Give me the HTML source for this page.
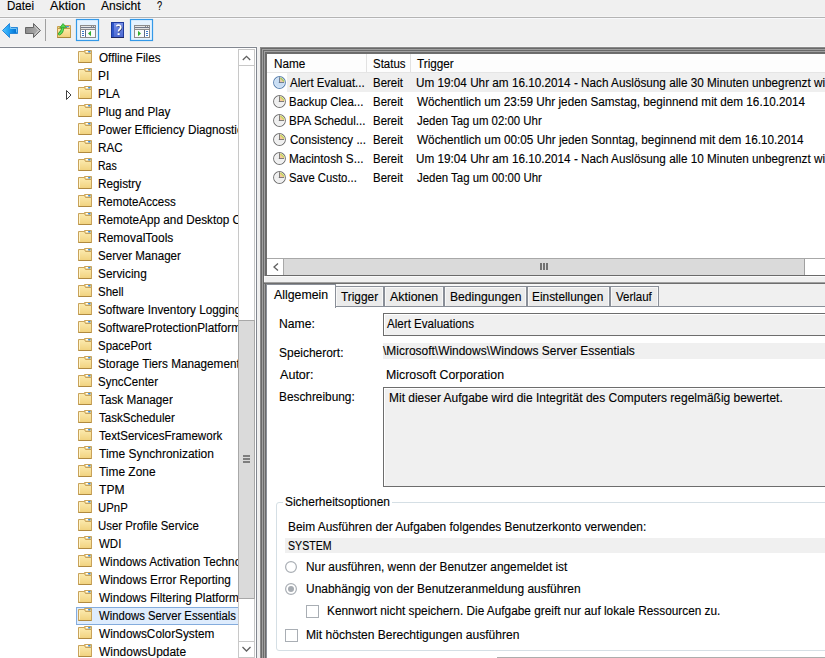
<!DOCTYPE html>
<html><head><meta charset="utf-8"><style>
html,body{margin:0;padding:0;}
body{width:825px;height:658px;overflow:hidden;position:relative;background:#f0f0f0;font-family:"Liberation Sans",sans-serif;font-size:11.75px;color:#000;}
.t{position:absolute;white-space:pre;line-height:14px;transform:scale(1,1.1);transform-origin:0 11px;-webkit-text-stroke:0.12px #000;}
</style></head><body>
<svg width="0" height="0" style="position:absolute"><defs><linearGradient id="fg" x1="0" y1="0" x2="0" y2="1"><stop offset="0" stop-color="#fcebb0"/><stop offset="1" stop-color="#f1d27e"/></linearGradient><linearGradient id="bl" x1="0" y1="0" x2="1" y2="0"><stop offset="0" stop-color="#52c4ff"/><stop offset="0.5" stop-color="#1a9af0"/><stop offset="1" stop-color="#0068c8"/></linearGradient><linearGradient id="gr" x1="0" y1="0" x2="1" y2="0"><stop offset="0" stop-color="#8a8a8a"/><stop offset="1" stop-color="#b4b4b4"/></linearGradient><linearGradient id="hb" x1="0" y1="0" x2="0" y2="1"><stop offset="0" stop-color="#7890e8"/><stop offset="1" stop-color="#4a68d0"/></linearGradient><linearGradient id="ff" x1="0" y1="0" x2="0" y2="1"><stop offset="0" stop-color="#fdeaa8"/><stop offset="1" stop-color="#f0cf78"/></linearGradient></defs></svg>
<div style="position:absolute;left:0px;top:16px;width:825px;height:1px;background:#f5f5f5"></div>
<div style="position:absolute;left:0px;top:17px;width:825px;height:1px;background:#b4b4b4"></div>
<div style="position:absolute;left:0px;top:18px;width:825px;height:1px;background:#f8f9fc"></div>
<div class="t" id="t0" style="left:7.20px;top:-1px;transform:scale(0.9846,1.1);">Datei</div>
<div class="t" id="t1" style="left:50.00px;top:-1px;transform:scale(1.0781,1.1);">Aktion</div>
<div class="t" id="t2" style="left:101.00px;top:-1px;transform:scale(1.0256,1.1);">Ansicht</div>
<div class="t" id="t3" style="left:157.00px;top:-1px;transform:scale(0.7833,1.1);">?</div>
<div style="position:absolute;left:0px;top:46px;width:825px;height:1px;background:#f5f5f5"></div>
<div style="position:absolute;left:0px;top:47px;width:257px;height:1px;background:#828790"></div>
<div style="position:absolute;left:0px;top:48px;width:256px;height:610px;background:#fff"></div>
<div style="position:absolute;left:256px;top:47px;width:1px;height:611px;background:#828790"></div>
<div style="position:absolute;left:0;top:48px;width:238px;height:610px;overflow:hidden">
<svg style="position:absolute;left:78px;top:2px" width="14" height="13" viewBox="0 0 14 13"><path d="M6.5 0.5h7v4h-7z" fill="#f0d690" stroke="#c9a45c"/>
<rect x="8" y="1" width="3" height="1.2" fill="#fff"/><rect x="10" y="0.9" width="2.6" height="1.5" rx="0.7" fill="#3d8ee0"/>
<path d="M0.5 1.5H6.5L7.5 3.5H13.5V12.5H0.5Z" fill="url(#fg)" stroke="#c9a35a"/>
<path d="M1.5 2.5V11.5" stroke="#fff4c8" stroke-width="1"/>
<path d="M0.5 12.5H13.5" stroke="#b08a40" stroke-width="1"/></svg>
<div class="t" id="t4" style="left:99.00px;top:3px;transform:scale(0.9952,1.1);">Offline Files</div>
<svg style="position:absolute;left:78px;top:20px" width="14" height="13" viewBox="0 0 14 13"><path d="M6.5 0.5h7v4h-7z" fill="#f0d690" stroke="#c9a45c"/>
<rect x="8" y="1" width="3" height="1.2" fill="#fff"/><rect x="10" y="0.9" width="2.6" height="1.5" rx="0.7" fill="#3d8ee0"/>
<path d="M0.5 1.5H6.5L7.5 3.5H13.5V12.5H0.5Z" fill="url(#fg)" stroke="#c9a35a"/>
<path d="M1.5 2.5V11.5" stroke="#fff4c8" stroke-width="1"/>
<path d="M0.5 12.5H13.5" stroke="#b08a40" stroke-width="1"/></svg>
<div class="t" id="t5" style="left:98.00px;top:21px;transform:scale(1.0111,1.1);">PI</div>
<svg style="position:absolute;left:78px;top:38px" width="14" height="13" viewBox="0 0 14 13"><path d="M6.5 0.5h7v4h-7z" fill="#f0d690" stroke="#c9a45c"/>
<rect x="8" y="1" width="3" height="1.2" fill="#fff"/><rect x="10" y="0.9" width="2.6" height="1.5" rx="0.7" fill="#3d8ee0"/>
<path d="M0.5 1.5H6.5L7.5 3.5H13.5V12.5H0.5Z" fill="url(#fg)" stroke="#c9a35a"/>
<path d="M1.5 2.5V11.5" stroke="#fff4c8" stroke-width="1"/>
<path d="M0.5 12.5H13.5" stroke="#b08a40" stroke-width="1"/></svg>
<div class="t" id="t6" style="left:98.00px;top:39px;transform:scale(0.9810,1.1);">PLA</div>
<svg style="position:absolute;left:65px;top:41px" width="8" height="12" viewBox="0 0 8 12"><path d="M1.5 1.5 L1.5 10.5 L6 6 Z" fill="none" stroke="#404040" stroke-width="1"/></svg>
<svg style="position:absolute;left:78px;top:56px" width="14" height="13" viewBox="0 0 14 13"><path d="M6.5 0.5h7v4h-7z" fill="#f0d690" stroke="#c9a45c"/>
<rect x="8" y="1" width="3" height="1.2" fill="#fff"/><rect x="10" y="0.9" width="2.6" height="1.5" rx="0.7" fill="#3d8ee0"/>
<path d="M0.5 1.5H6.5L7.5 3.5H13.5V12.5H0.5Z" fill="url(#fg)" stroke="#c9a35a"/>
<path d="M1.5 2.5V11.5" stroke="#fff4c8" stroke-width="1"/>
<path d="M0.5 12.5H13.5" stroke="#b08a40" stroke-width="1"/></svg>
<div class="t" id="t7" style="left:98.00px;top:57px;transform:scale(0.9972,1.1);">Plug and Play</div>
<svg style="position:absolute;left:78px;top:74px" width="14" height="13" viewBox="0 0 14 13"><path d="M6.5 0.5h7v4h-7z" fill="#f0d690" stroke="#c9a45c"/>
<rect x="8" y="1" width="3" height="1.2" fill="#fff"/><rect x="10" y="0.9" width="2.6" height="1.5" rx="0.7" fill="#3d8ee0"/>
<path d="M0.5 1.5H6.5L7.5 3.5H13.5V12.5H0.5Z" fill="url(#fg)" stroke="#c9a35a"/>
<path d="M1.5 2.5V11.5" stroke="#fff4c8" stroke-width="1"/>
<path d="M0.5 12.5H13.5" stroke="#b08a40" stroke-width="1"/></svg>
<div class="t" id="t8" style="left:98.00px;top:75px;transform:scale(1.0000,1.1);">Power Efficiency Diagnostics</div>
<svg style="position:absolute;left:78px;top:92px" width="14" height="13" viewBox="0 0 14 13"><path d="M6.5 0.5h7v4h-7z" fill="#f0d690" stroke="#c9a45c"/>
<rect x="8" y="1" width="3" height="1.2" fill="#fff"/><rect x="10" y="0.9" width="2.6" height="1.5" rx="0.7" fill="#3d8ee0"/>
<path d="M0.5 1.5H6.5L7.5 3.5H13.5V12.5H0.5Z" fill="url(#fg)" stroke="#c9a35a"/>
<path d="M1.5 2.5V11.5" stroke="#fff4c8" stroke-width="1"/>
<path d="M0.5 12.5H13.5" stroke="#b08a40" stroke-width="1"/></svg>
<div class="t" id="t9" style="left:98.00px;top:93px;transform:scale(0.9913,1.1);">RAC</div>
<svg style="position:absolute;left:78px;top:110px" width="14" height="13" viewBox="0 0 14 13"><path d="M6.5 0.5h7v4h-7z" fill="#f0d690" stroke="#c9a45c"/>
<rect x="8" y="1" width="3" height="1.2" fill="#fff"/><rect x="10" y="0.9" width="2.6" height="1.5" rx="0.7" fill="#3d8ee0"/>
<path d="M0.5 1.5H6.5L7.5 3.5H13.5V12.5H0.5Z" fill="url(#fg)" stroke="#c9a35a"/>
<path d="M1.5 2.5V11.5" stroke="#fff4c8" stroke-width="1"/>
<path d="M0.5 12.5H13.5" stroke="#b08a40" stroke-width="1"/></svg>
<div class="t" id="t10" style="left:98.00px;top:111px;transform:scale(0.8950,1.1);">Ras</div>
<svg style="position:absolute;left:78px;top:128px" width="14" height="13" viewBox="0 0 14 13"><path d="M6.5 0.5h7v4h-7z" fill="#f0d690" stroke="#c9a45c"/>
<rect x="8" y="1" width="3" height="1.2" fill="#fff"/><rect x="10" y="0.9" width="2.6" height="1.5" rx="0.7" fill="#3d8ee0"/>
<path d="M0.5 1.5H6.5L7.5 3.5H13.5V12.5H0.5Z" fill="url(#fg)" stroke="#c9a35a"/>
<path d="M1.5 2.5V11.5" stroke="#fff4c8" stroke-width="1"/>
<path d="M0.5 12.5H13.5" stroke="#b08a40" stroke-width="1"/></svg>
<div class="t" id="t11" style="left:98.00px;top:129px;transform:scale(1.0000,1.1);">Registry</div>
<svg style="position:absolute;left:78px;top:146px" width="14" height="13" viewBox="0 0 14 13"><path d="M6.5 0.5h7v4h-7z" fill="#f0d690" stroke="#c9a45c"/>
<rect x="8" y="1" width="3" height="1.2" fill="#fff"/><rect x="10" y="0.9" width="2.6" height="1.5" rx="0.7" fill="#3d8ee0"/>
<path d="M0.5 1.5H6.5L7.5 3.5H13.5V12.5H0.5Z" fill="url(#fg)" stroke="#c9a35a"/>
<path d="M1.5 2.5V11.5" stroke="#fff4c8" stroke-width="1"/>
<path d="M0.5 12.5H13.5" stroke="#b08a40" stroke-width="1"/></svg>
<div class="t" id="t12" style="left:98.00px;top:147px;transform:scale(0.9833,1.1);">RemoteAccess</div>
<svg style="position:absolute;left:78px;top:164px" width="14" height="13" viewBox="0 0 14 13"><path d="M6.5 0.5h7v4h-7z" fill="#f0d690" stroke="#c9a45c"/>
<rect x="8" y="1" width="3" height="1.2" fill="#fff"/><rect x="10" y="0.9" width="2.6" height="1.5" rx="0.7" fill="#3d8ee0"/>
<path d="M0.5 1.5H6.5L7.5 3.5H13.5V12.5H0.5Z" fill="url(#fg)" stroke="#c9a35a"/>
<path d="M1.5 2.5V11.5" stroke="#fff4c8" stroke-width="1"/>
<path d="M0.5 12.5H13.5" stroke="#b08a40" stroke-width="1"/></svg>
<div class="t" id="t13" style="left:98.00px;top:165px;transform:scale(1.0000,1.1);">RemoteApp and Desktop Connections</div>
<svg style="position:absolute;left:78px;top:182px" width="14" height="13" viewBox="0 0 14 13"><path d="M6.5 0.5h7v4h-7z" fill="#f0d690" stroke="#c9a45c"/>
<rect x="8" y="1" width="3" height="1.2" fill="#fff"/><rect x="10" y="0.9" width="2.6" height="1.5" rx="0.7" fill="#3d8ee0"/>
<path d="M0.5 1.5H6.5L7.5 3.5H13.5V12.5H0.5Z" fill="url(#fg)" stroke="#c9a35a"/>
<path d="M1.5 2.5V11.5" stroke="#fff4c8" stroke-width="1"/>
<path d="M0.5 12.5H13.5" stroke="#b08a40" stroke-width="1"/></svg>
<div class="t" id="t14" style="left:98.00px;top:183px;transform:scale(1.0205,1.1);">RemovalTools</div>
<svg style="position:absolute;left:78px;top:200px" width="14" height="13" viewBox="0 0 14 13"><path d="M6.5 0.5h7v4h-7z" fill="#f0d690" stroke="#c9a45c"/>
<rect x="8" y="1" width="3" height="1.2" fill="#fff"/><rect x="10" y="0.9" width="2.6" height="1.5" rx="0.7" fill="#3d8ee0"/>
<path d="M0.5 1.5H6.5L7.5 3.5H13.5V12.5H0.5Z" fill="url(#fg)" stroke="#c9a35a"/>
<path d="M1.5 2.5V11.5" stroke="#fff4c8" stroke-width="1"/>
<path d="M0.5 12.5H13.5" stroke="#b08a40" stroke-width="1"/></svg>
<div class="t" id="t15" style="left:98.00px;top:201px;transform:scale(0.9831,1.1);">Server Manager</div>
<svg style="position:absolute;left:78px;top:218px" width="14" height="13" viewBox="0 0 14 13"><path d="M6.5 0.5h7v4h-7z" fill="#f0d690" stroke="#c9a45c"/>
<rect x="8" y="1" width="3" height="1.2" fill="#fff"/><rect x="10" y="0.9" width="2.6" height="1.5" rx="0.7" fill="#3d8ee0"/>
<path d="M0.5 1.5H6.5L7.5 3.5H13.5V12.5H0.5Z" fill="url(#fg)" stroke="#c9a35a"/>
<path d="M1.5 2.5V11.5" stroke="#fff4c8" stroke-width="1"/>
<path d="M0.5 12.5H13.5" stroke="#b08a40" stroke-width="1"/></svg>
<div class="t" id="t16" style="left:98.00px;top:219px;transform:scale(1.0085,1.1);">Servicing</div>
<svg style="position:absolute;left:78px;top:236px" width="14" height="13" viewBox="0 0 14 13"><path d="M6.5 0.5h7v4h-7z" fill="#f0d690" stroke="#c9a45c"/>
<rect x="8" y="1" width="3" height="1.2" fill="#fff"/><rect x="10" y="0.9" width="2.6" height="1.5" rx="0.7" fill="#3d8ee0"/>
<path d="M0.5 1.5H6.5L7.5 3.5H13.5V12.5H0.5Z" fill="url(#fg)" stroke="#c9a35a"/>
<path d="M1.5 2.5V11.5" stroke="#fff4c8" stroke-width="1"/>
<path d="M0.5 12.5H13.5" stroke="#b08a40" stroke-width="1"/></svg>
<div class="t" id="t17" style="left:98.00px;top:237px;transform:scale(0.9800,1.1);">Shell</div>
<svg style="position:absolute;left:78px;top:254px" width="14" height="13" viewBox="0 0 14 13"><path d="M6.5 0.5h7v4h-7z" fill="#f0d690" stroke="#c9a45c"/>
<rect x="8" y="1" width="3" height="1.2" fill="#fff"/><rect x="10" y="0.9" width="2.6" height="1.5" rx="0.7" fill="#3d8ee0"/>
<path d="M0.5 1.5H6.5L7.5 3.5H13.5V12.5H0.5Z" fill="url(#fg)" stroke="#c9a35a"/>
<path d="M1.5 2.5V11.5" stroke="#fff4c8" stroke-width="1"/>
<path d="M0.5 12.5H13.5" stroke="#b08a40" stroke-width="1"/></svg>
<div class="t" id="t18" style="left:98.00px;top:255px;transform:scale(1.0000,1.1);">Software Inventory Logging</div>
<svg style="position:absolute;left:78px;top:272px" width="14" height="13" viewBox="0 0 14 13"><path d="M6.5 0.5h7v4h-7z" fill="#f0d690" stroke="#c9a45c"/>
<rect x="8" y="1" width="3" height="1.2" fill="#fff"/><rect x="10" y="0.9" width="2.6" height="1.5" rx="0.7" fill="#3d8ee0"/>
<path d="M0.5 1.5H6.5L7.5 3.5H13.5V12.5H0.5Z" fill="url(#fg)" stroke="#c9a35a"/>
<path d="M1.5 2.5V11.5" stroke="#fff4c8" stroke-width="1"/>
<path d="M0.5 12.5H13.5" stroke="#b08a40" stroke-width="1"/></svg>
<div class="t" id="t19" style="left:98.00px;top:273px;transform:scale(1.0000,1.1);">SoftwareProtectionPlatform</div>
<svg style="position:absolute;left:78px;top:290px" width="14" height="13" viewBox="0 0 14 13"><path d="M6.5 0.5h7v4h-7z" fill="#f0d690" stroke="#c9a45c"/>
<rect x="8" y="1" width="3" height="1.2" fill="#fff"/><rect x="10" y="0.9" width="2.6" height="1.5" rx="0.7" fill="#3d8ee0"/>
<path d="M0.5 1.5H6.5L7.5 3.5H13.5V12.5H0.5Z" fill="url(#fg)" stroke="#c9a35a"/>
<path d="M1.5 2.5V11.5" stroke="#fff4c8" stroke-width="1"/>
<path d="M0.5 12.5H13.5" stroke="#b08a40" stroke-width="1"/></svg>
<div class="t" id="t20" style="left:98.00px;top:291px;transform:scale(0.9741,1.1);">SpacePort</div>
<svg style="position:absolute;left:78px;top:308px" width="14" height="13" viewBox="0 0 14 13"><path d="M6.5 0.5h7v4h-7z" fill="#f0d690" stroke="#c9a45c"/>
<rect x="8" y="1" width="3" height="1.2" fill="#fff"/><rect x="10" y="0.9" width="2.6" height="1.5" rx="0.7" fill="#3d8ee0"/>
<path d="M0.5 1.5H6.5L7.5 3.5H13.5V12.5H0.5Z" fill="url(#fg)" stroke="#c9a35a"/>
<path d="M1.5 2.5V11.5" stroke="#fff4c8" stroke-width="1"/>
<path d="M0.5 12.5H13.5" stroke="#b08a40" stroke-width="1"/></svg>
<div class="t" id="t21" style="left:98.00px;top:309px;transform:scale(1.0000,1.1);">Storage Tiers Management</div>
<svg style="position:absolute;left:78px;top:326px" width="14" height="13" viewBox="0 0 14 13"><path d="M6.5 0.5h7v4h-7z" fill="#f0d690" stroke="#c9a45c"/>
<rect x="8" y="1" width="3" height="1.2" fill="#fff"/><rect x="10" y="0.9" width="2.6" height="1.5" rx="0.7" fill="#3d8ee0"/>
<path d="M0.5 1.5H6.5L7.5 3.5H13.5V12.5H0.5Z" fill="url(#fg)" stroke="#c9a35a"/>
<path d="M1.5 2.5V11.5" stroke="#fff4c8" stroke-width="1"/>
<path d="M0.5 12.5H13.5" stroke="#b08a40" stroke-width="1"/></svg>
<div class="t" id="t22" style="left:98.00px;top:327px;transform:scale(0.9787,1.1);">SyncCenter</div>
<svg style="position:absolute;left:78px;top:344px" width="14" height="13" viewBox="0 0 14 13"><path d="M6.5 0.5h7v4h-7z" fill="#f0d690" stroke="#c9a45c"/>
<rect x="8" y="1" width="3" height="1.2" fill="#fff"/><rect x="10" y="0.9" width="2.6" height="1.5" rx="0.7" fill="#3d8ee0"/>
<path d="M0.5 1.5H6.5L7.5 3.5H13.5V12.5H0.5Z" fill="url(#fg)" stroke="#c9a35a"/>
<path d="M1.5 2.5V11.5" stroke="#fff4c8" stroke-width="1"/>
<path d="M0.5 12.5H13.5" stroke="#b08a40" stroke-width="1"/></svg>
<div class="t" id="t23" style="left:99.00px;top:345px;transform:scale(1.0000,1.1);">Task Manager</div>
<svg style="position:absolute;left:78px;top:362px" width="14" height="13" viewBox="0 0 14 13"><path d="M6.5 0.5h7v4h-7z" fill="#f0d690" stroke="#c9a45c"/>
<rect x="8" y="1" width="3" height="1.2" fill="#fff"/><rect x="10" y="0.9" width="2.6" height="1.5" rx="0.7" fill="#3d8ee0"/>
<path d="M0.5 1.5H6.5L7.5 3.5H13.5V12.5H0.5Z" fill="url(#fg)" stroke="#c9a35a"/>
<path d="M1.5 2.5V11.5" stroke="#fff4c8" stroke-width="1"/>
<path d="M0.5 12.5H13.5" stroke="#b08a40" stroke-width="1"/></svg>
<div class="t" id="t24" style="left:99.00px;top:363px;transform:scale(0.9831,1.1);">TaskScheduler</div>
<svg style="position:absolute;left:78px;top:380px" width="14" height="13" viewBox="0 0 14 13"><path d="M6.5 0.5h7v4h-7z" fill="#f0d690" stroke="#c9a45c"/>
<rect x="8" y="1" width="3" height="1.2" fill="#fff"/><rect x="10" y="0.9" width="2.6" height="1.5" rx="0.7" fill="#3d8ee0"/>
<path d="M0.5 1.5H6.5L7.5 3.5H13.5V12.5H0.5Z" fill="url(#fg)" stroke="#c9a35a"/>
<path d="M1.5 2.5V11.5" stroke="#fff4c8" stroke-width="1"/>
<path d="M0.5 12.5H13.5" stroke="#b08a40" stroke-width="1"/></svg>
<div class="t" id="t25" style="left:99.00px;top:381px;transform:scale(0.9832,1.1);">TextServicesFramework</div>
<svg style="position:absolute;left:78px;top:398px" width="14" height="13" viewBox="0 0 14 13"><path d="M6.5 0.5h7v4h-7z" fill="#f0d690" stroke="#c9a45c"/>
<rect x="8" y="1" width="3" height="1.2" fill="#fff"/><rect x="10" y="0.9" width="2.6" height="1.5" rx="0.7" fill="#3d8ee0"/>
<path d="M0.5 1.5H6.5L7.5 3.5H13.5V12.5H0.5Z" fill="url(#fg)" stroke="#c9a35a"/>
<path d="M1.5 2.5V11.5" stroke="#fff4c8" stroke-width="1"/>
<path d="M0.5 12.5H13.5" stroke="#b08a40" stroke-width="1"/></svg>
<div class="t" id="t26" style="left:99.00px;top:399px;transform:scale(1.0214,1.1);">Time Synchronization</div>
<svg style="position:absolute;left:78px;top:416px" width="14" height="13" viewBox="0 0 14 13"><path d="M6.5 0.5h7v4h-7z" fill="#f0d690" stroke="#c9a45c"/>
<rect x="8" y="1" width="3" height="1.2" fill="#fff"/><rect x="10" y="0.9" width="2.6" height="1.5" rx="0.7" fill="#3d8ee0"/>
<path d="M0.5 1.5H6.5L7.5 3.5H13.5V12.5H0.5Z" fill="url(#fg)" stroke="#c9a35a"/>
<path d="M1.5 2.5V11.5" stroke="#fff4c8" stroke-width="1"/>
<path d="M0.5 12.5H13.5" stroke="#b08a40" stroke-width="1"/></svg>
<div class="t" id="t27" style="left:99.00px;top:417px;transform:scale(1.0143,1.1);">Time Zone</div>
<svg style="position:absolute;left:78px;top:434px" width="14" height="13" viewBox="0 0 14 13"><path d="M6.5 0.5h7v4h-7z" fill="#f0d690" stroke="#c9a45c"/>
<rect x="8" y="1" width="3" height="1.2" fill="#fff"/><rect x="10" y="0.9" width="2.6" height="1.5" rx="0.7" fill="#3d8ee0"/>
<path d="M0.5 1.5H6.5L7.5 3.5H13.5V12.5H0.5Z" fill="url(#fg)" stroke="#c9a35a"/>
<path d="M1.5 2.5V11.5" stroke="#fff4c8" stroke-width="1"/>
<path d="M0.5 12.5H13.5" stroke="#b08a40" stroke-width="1"/></svg>
<div class="t" id="t28" style="left:99.00px;top:435px;transform:scale(1.0292,1.1);">TPM</div>
<svg style="position:absolute;left:78px;top:452px" width="14" height="13" viewBox="0 0 14 13"><path d="M6.5 0.5h7v4h-7z" fill="#f0d690" stroke="#c9a45c"/>
<rect x="8" y="1" width="3" height="1.2" fill="#fff"/><rect x="10" y="0.9" width="2.6" height="1.5" rx="0.7" fill="#3d8ee0"/>
<path d="M0.5 1.5H6.5L7.5 3.5H13.5V12.5H0.5Z" fill="url(#fg)" stroke="#c9a35a"/>
<path d="M1.5 2.5V11.5" stroke="#fff4c8" stroke-width="1"/>
<path d="M0.5 12.5H13.5" stroke="#b08a40" stroke-width="1"/></svg>
<div class="t" id="t29" style="left:98.00px;top:453px;transform:scale(0.9690,1.1);">UPnP</div>
<svg style="position:absolute;left:78px;top:470px" width="14" height="13" viewBox="0 0 14 13"><path d="M6.5 0.5h7v4h-7z" fill="#f0d690" stroke="#c9a45c"/>
<rect x="8" y="1" width="3" height="1.2" fill="#fff"/><rect x="10" y="0.9" width="2.6" height="1.5" rx="0.7" fill="#3d8ee0"/>
<path d="M0.5 1.5H6.5L7.5 3.5H13.5V12.5H0.5Z" fill="url(#fg)" stroke="#c9a35a"/>
<path d="M1.5 2.5V11.5" stroke="#fff4c8" stroke-width="1"/>
<path d="M0.5 12.5H13.5" stroke="#b08a40" stroke-width="1"/></svg>
<div class="t" id="t30" style="left:98.00px;top:471px;transform:scale(0.9709,1.1);">User Profile Service</div>
<svg style="position:absolute;left:78px;top:488px" width="14" height="13" viewBox="0 0 14 13"><path d="M6.5 0.5h7v4h-7z" fill="#f0d690" stroke="#c9a45c"/>
<rect x="8" y="1" width="3" height="1.2" fill="#fff"/><rect x="10" y="0.9" width="2.6" height="1.5" rx="0.7" fill="#3d8ee0"/>
<path d="M0.5 1.5H6.5L7.5 3.5H13.5V12.5H0.5Z" fill="url(#fg)" stroke="#c9a35a"/>
<path d="M1.5 2.5V11.5" stroke="#fff4c8" stroke-width="1"/>
<path d="M0.5 12.5H13.5" stroke="#b08a40" stroke-width="1"/></svg>
<div class="t" id="t31" style="left:99.00px;top:489px;transform:scale(0.9773,1.1);">WDI</div>
<svg style="position:absolute;left:78px;top:506px" width="14" height="13" viewBox="0 0 14 13"><path d="M6.5 0.5h7v4h-7z" fill="#f0d690" stroke="#c9a45c"/>
<rect x="8" y="1" width="3" height="1.2" fill="#fff"/><rect x="10" y="0.9" width="2.6" height="1.5" rx="0.7" fill="#3d8ee0"/>
<path d="M0.5 1.5H6.5L7.5 3.5H13.5V12.5H0.5Z" fill="url(#fg)" stroke="#c9a35a"/>
<path d="M1.5 2.5V11.5" stroke="#fff4c8" stroke-width="1"/>
<path d="M0.5 12.5H13.5" stroke="#b08a40" stroke-width="1"/></svg>
<div class="t" id="t32" style="left:99.00px;top:507px;transform:scale(1.0000,1.1);">Windows Activation Technologies</div>
<svg style="position:absolute;left:78px;top:524px" width="14" height="13" viewBox="0 0 14 13"><path d="M6.5 0.5h7v4h-7z" fill="#f0d690" stroke="#c9a45c"/>
<rect x="8" y="1" width="3" height="1.2" fill="#fff"/><rect x="10" y="0.9" width="2.6" height="1.5" rx="0.7" fill="#3d8ee0"/>
<path d="M0.5 1.5H6.5L7.5 3.5H13.5V12.5H0.5Z" fill="url(#fg)" stroke="#c9a35a"/>
<path d="M1.5 2.5V11.5" stroke="#fff4c8" stroke-width="1"/>
<path d="M0.5 12.5H13.5" stroke="#b08a40" stroke-width="1"/></svg>
<div class="t" id="t33" style="left:99.00px;top:525px;transform:scale(1.0038,1.1);">Windows Error Reporting</div>
<svg style="position:absolute;left:78px;top:542px" width="14" height="13" viewBox="0 0 14 13"><path d="M6.5 0.5h7v4h-7z" fill="#f0d690" stroke="#c9a45c"/>
<rect x="8" y="1" width="3" height="1.2" fill="#fff"/><rect x="10" y="0.9" width="2.6" height="1.5" rx="0.7" fill="#3d8ee0"/>
<path d="M0.5 1.5H6.5L7.5 3.5H13.5V12.5H0.5Z" fill="url(#fg)" stroke="#c9a35a"/>
<path d="M1.5 2.5V11.5" stroke="#fff4c8" stroke-width="1"/>
<path d="M0.5 12.5H13.5" stroke="#b08a40" stroke-width="1"/></svg>
<div class="t" id="t34" style="left:99.00px;top:543px;transform:scale(1.0000,1.1);">Windows Filtering Platform</div>
<div style="position:absolute;left:76px;top:559px;width:170px;height:18px;box-sizing:border-box;border:1px solid #84acdd;background:#deecfd"></div>
<svg style="position:absolute;left:78px;top:560px" width="14" height="13" viewBox="0 0 14 13"><path d="M6.5 0.5h7v4h-7z" fill="#f0d690" stroke="#c9a45c"/>
<rect x="8" y="1" width="3" height="1.2" fill="#fff"/><rect x="10" y="0.9" width="2.6" height="1.5" rx="0.7" fill="#3d8ee0"/>
<path d="M0.5 1.5H6.5L7.5 3.5H13.5V12.5H0.5Z" fill="url(#fg)" stroke="#c9a35a"/>
<path d="M1.5 2.5V11.5" stroke="#fff4c8" stroke-width="1"/>
<path d="M0.5 12.5H13.5" stroke="#b08a40" stroke-width="1"/></svg>
<div class="t" id="t35" style="left:99.00px;top:561px;transform:scale(0.9613,1.1);">Windows Server Essentials</div>
<svg style="position:absolute;left:78px;top:578px" width="14" height="13" viewBox="0 0 14 13"><path d="M6.5 0.5h7v4h-7z" fill="#f0d690" stroke="#c9a45c"/>
<rect x="8" y="1" width="3" height="1.2" fill="#fff"/><rect x="10" y="0.9" width="2.6" height="1.5" rx="0.7" fill="#3d8ee0"/>
<path d="M0.5 1.5H6.5L7.5 3.5H13.5V12.5H0.5Z" fill="url(#fg)" stroke="#c9a35a"/>
<path d="M1.5 2.5V11.5" stroke="#fff4c8" stroke-width="1"/>
<path d="M0.5 12.5H13.5" stroke="#b08a40" stroke-width="1"/></svg>
<div class="t" id="t36" style="left:99.00px;top:579px;transform:scale(1.0043,1.1);">WindowsColorSystem</div>
<svg style="position:absolute;left:78px;top:596px" width="14" height="13" viewBox="0 0 14 13"><path d="M6.5 0.5h7v4h-7z" fill="#f0d690" stroke="#c9a45c"/>
<rect x="8" y="1" width="3" height="1.2" fill="#fff"/><rect x="10" y="0.9" width="2.6" height="1.5" rx="0.7" fill="#3d8ee0"/>
<path d="M0.5 1.5H6.5L7.5 3.5H13.5V12.5H0.5Z" fill="url(#fg)" stroke="#c9a35a"/>
<path d="M1.5 2.5V11.5" stroke="#fff4c8" stroke-width="1"/>
<path d="M0.5 12.5H13.5" stroke="#b08a40" stroke-width="1"/></svg>
<div class="t" id="t37" style="left:99.00px;top:597px;transform:scale(1.0176,1.1);">WindowsUpdate</div>
</div>
<div style="position:absolute;left:238px;top:49px;width:17px;height:609px;box-sizing:border-box;border-left:1px solid #c8c8c8;border-right:1px solid #c8c8c8;background:#fff"></div>
<div style="position:absolute;left:238px;top:49px;width:17px;height:17px;box-sizing:border-box;border:1px solid #c8c8c8;background:#fff"></div>
<svg style="position:absolute;left:239px;top:49px" width="15" height="16"><path d="M3.8 11 L7.5 7.3 L11.2 11" fill="none" stroke="#606060" stroke-width="1.3"/></svg>
<div style="position:absolute;left:238px;top:320px;width:17px;height:279px;box-sizing:border-box;border:1px solid #a8a8a8;background:#dadada"></div>
<svg style="position:absolute;left:239px;top:453px" width="15" height="12"><path d="M4 3h7M4 6h7M4 9h7" stroke="#606060" stroke-width="1.6"/></svg>
<div style="position:absolute;left:238px;top:641px;width:17px;height:17px;box-sizing:border-box;border:1px solid #c8c8c8;background:#fff"></div>
<svg style="position:absolute;left:239px;top:642px" width="15" height="16"><path d="M3.5 5 L7.5 9 L11.5 5" fill="none" stroke="#606060" stroke-width="1.3"/></svg>
<div style="position:absolute;left:260px;top:47px;width:565px;height:611px;background:#fff"></div>
<div style="position:absolute;left:260px;top:47px;width:1px;height:611px;background:#8a8a8a"></div>
<div style="position:absolute;left:260px;top:47px;width:565px;height:1px;background:#8a8a8a"></div>
<div style="position:absolute;left:261px;top:48px;width:1px;height:610px;background:#6a6a6a"></div>
<div style="position:absolute;left:261px;top:48px;width:564px;height:1px;background:#6a6a6a"></div>
<div style="position:absolute;left:262px;top:49px;width:1px;height:609px;background:#a0a0a0"></div>
<div style="position:absolute;left:262px;top:49px;width:563px;height:1px;background:#a0a0a0"></div>
<div style="position:absolute;left:263px;top:50px;width:1px;height:608px;background:#6a6a6a"></div>
<div style="position:absolute;left:263px;top:50px;width:562px;height:1px;background:#6a6a6a"></div>
<div style="position:absolute;left:264px;top:51px;width:1px;height:225px;background:#a0a0a0"></div>
<div style="position:absolute;left:264px;top:51px;width:561px;height:1px;background:#a0a0a0"></div>
<div style="position:absolute;left:265px;top:52px;width:1px;height:224px;background:#6a6a6a"></div>
<div style="position:absolute;left:265px;top:52px;width:560px;height:1px;background:#6a6a6a"></div>
<div style="position:absolute;left:266px;top:53px;width:1px;height:223px;background:#6e6e6e"></div>
<div style="position:absolute;left:266px;top:53px;width:559px;height:1px;background:#6e6e6e"></div>
<div style="position:absolute;left:267px;top:54px;width:558px;height:18px;background:#fdfdfd"></div>
<div style="position:absolute;left:267px;top:72px;width:558px;height:1px;background:#e5e5e5"></div>
<div style="position:absolute;left:366px;top:54px;width:1px;height:18px;background:#e2e2e2"></div>
<div style="position:absolute;left:410px;top:54px;width:1px;height:18px;background:#e2e2e2"></div>
<div class="t" id="t38" style="left:274.00px;top:57px;transform:scale(1.0000,1.1);">Name</div>
<div class="t" id="t39" style="left:373.00px;top:57px;transform:scale(0.9750,1.1);">Status</div>
<div class="t" id="t40" style="left:417.00px;top:57px;transform:scale(1.0000,1.1);">Trigger</div>
<div style="position:absolute;left:287px;top:73px;width:538px;height:19px;background:#efefef"></div>
<svg style="position:absolute;left:273px;top:76px" width="13" height="13" viewBox="0 0 13 13"><circle cx="6.5" cy="6.5" r="5.8" fill="#c9def4" stroke="#5f86b2" stroke-width="1.3"/><circle cx="6.5" cy="6.5" r="5" fill="none" stroke="#e2eefb" stroke-width="0.8"/><path d="M6.5 6.5V1.5A5 5 0 0 1 11.5 6.5Z" fill="#ebcaa8"/><path d="M7.5 1.8L11.2 5.5" fill="none" stroke="#a8cc60" stroke-width="1.4"/><path d="M6.5 1.2v5.8M5.8 6.5h5.2" fill="none" stroke="#607088" stroke-width="0.85"/></svg>
<div class="t" id="t41" style="left:289.60px;top:76px;transform:scale(0.9776,1.1);">Alert Evaluat...</div>
<div class="t" id="t42" style="left:373.00px;top:76px;transform:scale(0.9733,1.1);">Bereit</div>
<div class="t" id="t43" style="left:416.30px;top:76px;transform:scale(0.9989,1.1);">Um 19:04 Uhr am 16.10.2014 - Nach Auslösung alle 30 Minuten unbegrenzt wiederholen</div>
<svg style="position:absolute;left:273px;top:95px" width="13" height="13" viewBox="0 0 13 13"><circle cx="6.5" cy="6.5" r="5.8" fill="#efefef" stroke="#777" stroke-width="1.3"/><circle cx="6.5" cy="6.5" r="5" fill="none" stroke="#fbfbfb" stroke-width="0.8"/><path d="M6.5 6.5V1.5A5 5 0 0 1 11.5 6.5Z" fill="#f9c99c"/><path d="M7.5 1.8L11.2 5.5" fill="none" stroke="#c4d860" stroke-width="1.4"/><path d="M6.5 1.2v5.8M5.8 6.5h5.2" fill="none" stroke="#6a6a6a" stroke-width="0.85"/></svg>
<div class="t" id="t44" style="left:289.00px;top:95px;transform:scale(0.9733,1.1);">Backup Clea...</div>
<div class="t" id="t45" style="left:373.00px;top:95px;transform:scale(0.9733,1.1);">Bereit</div>
<div class="t" id="t46" style="left:417.30px;top:95px;transform:scale(0.9985,1.1);">Wöchentlich um 23:59 Uhr jeden Samstag, beginnend mit dem 16.10.2014</div>
<svg style="position:absolute;left:273px;top:114px" width="13" height="13" viewBox="0 0 13 13"><circle cx="6.5" cy="6.5" r="5.8" fill="#efefef" stroke="#777" stroke-width="1.3"/><circle cx="6.5" cy="6.5" r="5" fill="none" stroke="#fbfbfb" stroke-width="0.8"/><path d="M6.5 6.5V1.5A5 5 0 0 1 11.5 6.5Z" fill="#f9c99c"/><path d="M7.5 1.8L11.2 5.5" fill="none" stroke="#c4d860" stroke-width="1.4"/><path d="M6.5 1.2v5.8M5.8 6.5h5.2" fill="none" stroke="#6a6a6a" stroke-width="0.85"/></svg>
<div class="t" id="t47" style="left:289.00px;top:114px;transform:scale(0.9868,1.1);">BPA Schedul...</div>
<div class="t" id="t48" style="left:373.00px;top:114px;transform:scale(0.9733,1.1);">Bereit</div>
<div class="t" id="t49" style="left:417.30px;top:114px;transform:scale(0.9705,1.1);">Jeden Tag um 02:00 Uhr</div>
<svg style="position:absolute;left:273px;top:133px" width="13" height="13" viewBox="0 0 13 13"><circle cx="6.5" cy="6.5" r="5.8" fill="#efefef" stroke="#777" stroke-width="1.3"/><circle cx="6.5" cy="6.5" r="5" fill="none" stroke="#fbfbfb" stroke-width="0.8"/><path d="M6.5 6.5V1.5A5 5 0 0 1 11.5 6.5Z" fill="#f9c99c"/><path d="M7.5 1.8L11.2 5.5" fill="none" stroke="#c4d860" stroke-width="1.4"/><path d="M6.5 1.2v5.8M5.8 6.5h5.2" fill="none" stroke="#6a6a6a" stroke-width="0.85"/></svg>
<div class="t" id="t50" style="left:290.00px;top:133px;transform:scale(0.9868,1.1);">Consistency ...</div>
<div class="t" id="t51" style="left:373.00px;top:133px;transform:scale(0.9733,1.1);">Bereit</div>
<div class="t" id="t52" style="left:417.30px;top:133px;transform:scale(1.0013,1.1);">Wöchentlich um 00:05 Uhr jeden Sonntag, beginnend mit dem 16.10.2014</div>
<svg style="position:absolute;left:273px;top:152px" width="13" height="13" viewBox="0 0 13 13"><circle cx="6.5" cy="6.5" r="5.8" fill="#efefef" stroke="#777" stroke-width="1.3"/><circle cx="6.5" cy="6.5" r="5" fill="none" stroke="#fbfbfb" stroke-width="0.8"/><path d="M6.5 6.5V1.5A5 5 0 0 1 11.5 6.5Z" fill="#f9c99c"/><path d="M7.5 1.8L11.2 5.5" fill="none" stroke="#c4d860" stroke-width="1.4"/><path d="M6.5 1.2v5.8M5.8 6.5h5.2" fill="none" stroke="#6a6a6a" stroke-width="0.85"/></svg>
<div class="t" id="t53" style="left:289.00px;top:152px;transform:scale(1.0000,1.1);">Macintosh S...</div>
<div class="t" id="t54" style="left:373.00px;top:152px;transform:scale(0.9733,1.1);">Bereit</div>
<div class="t" id="t55" style="left:416.30px;top:152px;transform:scale(0.9989,1.1);">Um 19:04 Uhr am 16.10.2014 - Nach Auslösung alle 10 Minuten unbegrenzt wiederholen</div>
<svg style="position:absolute;left:273px;top:171px" width="13" height="13" viewBox="0 0 13 13"><circle cx="6.5" cy="6.5" r="5.8" fill="#efefef" stroke="#777" stroke-width="1.3"/><circle cx="6.5" cy="6.5" r="5" fill="none" stroke="#fbfbfb" stroke-width="0.8"/><path d="M6.5 6.5V1.5A5 5 0 0 1 11.5 6.5Z" fill="#f9c99c"/><path d="M7.5 1.8L11.2 5.5" fill="none" stroke="#c4d860" stroke-width="1.4"/><path d="M6.5 1.2v5.8M5.8 6.5h5.2" fill="none" stroke="#6a6a6a" stroke-width="0.85"/></svg>
<div class="t" id="t56" style="left:289.00px;top:171px;transform:scale(0.9609,1.1);">Save Custo...</div>
<div class="t" id="t57" style="left:373.00px;top:171px;transform:scale(0.9733,1.1);">Bereit</div>
<div class="t" id="t58" style="left:417.30px;top:171px;transform:scale(0.9721,1.1);">Jeden Tag um 00:00 Uhr</div>
<div style="position:absolute;left:267px;top:258px;width:558px;height:17px;background:#fff"></div>
<div style="position:absolute;left:267px;top:258px;width:558px;height:1px;background:#a8a8a8"></div>
<div style="position:absolute;left:283px;top:259px;width:522px;height:16px;box-sizing:border-box;border-left:1px solid #a8a8a8;border-right:1px solid #a0a0a0;background:#dadada"></div>
<svg style="position:absolute;left:267px;top:259px" width="17" height="16"><path d="M11 4.5 L7 8 L11 11.5" fill="none" stroke="#606060" stroke-width="1.3"/></svg>
<svg style="position:absolute;left:538px;top:262px" width="12" height="10"><path d="M3 1v7M6 1v7M9 1v7" stroke="#606060" stroke-width="1.7"/></svg>
<div style="position:absolute;left:265px;top:275px;width:560px;height:1px;background:#6a6a6a"></div>
<div style="position:absolute;left:264px;top:276px;width:561px;height:1px;background:#fafafa"></div>
<div style="position:absolute;left:264px;top:277px;width:1px;height:5px;background:#fafafa"></div>
<div style="position:absolute;left:265px;top:277px;width:560px;height:5px;background:#f0f0f0"></div>
<div style="position:absolute;left:264px;top:282px;width:561px;height:1px;background:#a0a0a0"></div>
<div style="position:absolute;left:264px;top:283px;width:561px;height:1px;background:#6e6e6e"></div>
<div style="position:absolute;left:264px;top:284px;width:1px;height:374px;background:#a0a0a0"></div>
<div style="position:absolute;left:265px;top:284px;width:1px;height:374px;background:#6a6a6a"></div>
<div style="position:absolute;left:266px;top:284px;width:559px;height:22px;background:#f0f0f0"></div>
<div style="position:absolute;left:336px;top:284px;width:323px;height:2px;background:#f8f8f8"></div>
<div style="position:absolute;left:335px;top:286px;width:49px;height:20px;box-sizing:border-box;border:1px solid #8a8f98;border-bottom:none;background:#ebebeb;box-shadow:inset 1px 1px 0 #f8f8f8,inset -1px 0 0 #f8f8f8"></div>
<div class="t" id="t59" style="left:340.70px;top:290px;transform:scale(1.0081,1.1);">Trigger</div>
<div style="position:absolute;left:384px;top:286px;width:60px;height:20px;box-sizing:border-box;border:1px solid #8a8f98;border-bottom:none;background:#ebebeb;box-shadow:inset 1px 1px 0 #f8f8f8,inset -1px 0 0 #f8f8f8"></div>
<div class="t" id="t60" style="left:390.10px;top:290px;transform:scale(1.0556,1.1);">Aktionen</div>
<div style="position:absolute;left:444px;top:286px;width:83px;height:20px;box-sizing:border-box;border:1px solid #8a8f98;border-bottom:none;background:#ebebeb;box-shadow:inset 1px 1px 0 #f8f8f8,inset -1px 0 0 #f8f8f8"></div>
<div class="t" id="t61" style="left:449.60px;top:290px;transform:scale(1.0324,1.1);">Bedingungen</div>
<div style="position:absolute;left:527px;top:286px;width:83px;height:20px;box-sizing:border-box;border:1px solid #8a8f98;border-bottom:none;background:#ebebeb;box-shadow:inset 1px 1px 0 #f8f8f8,inset -1px 0 0 #f8f8f8"></div>
<div class="t" id="t62" style="left:532.40px;top:290px;transform:scale(1.0101,1.1);">Einstellungen</div>
<div style="position:absolute;left:610px;top:286px;width:49px;height:20px;box-sizing:border-box;border:1px solid #8a8f98;border-bottom:none;background:#ebebeb;box-shadow:inset 1px 1px 0 #f8f8f8,inset -1px 0 0 #f8f8f8"></div>
<div class="t" id="t63" style="left:616.20px;top:290px;transform:scale(0.9784,1.1);">Verlauf</div>
<div style="position:absolute;left:266px;top:306px;width:559px;height:352px;background:#fff"></div>
<div style="position:absolute;left:266px;top:306px;width:1px;height:352px;background:#8a8f98"></div>
<div style="position:absolute;left:335px;top:306px;width:490px;height:1px;background:#8a8f98"></div>
<div style="position:absolute;left:266px;top:284px;width:70px;height:24px;box-sizing:border-box;border:1px solid #8a8f98;border-bottom:none;background:#fff"></div>
<div class="t" id="t64" style="left:273.80px;top:288px;transform:scale(1.0490,1.1);">Allgemein</div>
<div class="t" id="t65" style="left:278.70px;top:317px;transform:scale(1.0364,1.1);">Name:</div>
<div style="position:absolute;left:383px;top:313px;width:442px;height:23px;box-sizing:border-box;border:1px solid #6d6d6d;border-right:none;background:#f0f0f0;box-shadow:inset 1px 1px 0 #fff"></div>
<div class="t" id="t66" style="left:386.70px;top:317px;transform:scale(0.9875,1.1);">Alert Evaluations</div>
<div class="t" id="t67" style="left:278.70px;top:346px;transform:scale(1.0180,1.1);">Speicherort:</div>
<div style="position:absolute;left:383px;top:343px;width:442px;height:16px;background:#f0f0f0"></div>
<div class="t" id="t68" style="left:383.20px;top:344px;transform:scale(1.0174,1.1);">\Microsoft\Windows\Windows Server Essentials</div>
<div class="t" id="t69" style="left:279.70px;top:368px;transform:scale(1.0700,1.1);">Autor:</div>
<div class="t" id="t70" style="left:385.70px;top:368px;transform:scale(1.0505,1.1);">Microsoft Corporation</div>
<div class="t" id="t71" style="left:278.70px;top:390px;transform:scale(1.0082,1.1);">Beschreibung:</div>
<div style="position:absolute;left:383px;top:387px;width:442px;height:100px;box-sizing:border-box;border:1px solid #6d6d6d;border-right:none;background:#f0f0f0;box-shadow:inset 1px 1px 0 #fff"></div>
<div class="t" id="t72" style="left:388.70px;top:391px;transform:scale(1.0184,1.1);">Mit dieser Aufgabe wird die Integrität des Computers regelmäßig bewertet.</div>
<div style="position:absolute;left:276px;top:502px;width:560px;height:149px;box-sizing:border-box;border:1px solid #d5dfe5;border-radius:3px"></div>
<div style="position:absolute;left:283px;top:497px;width:109px;height:12px;background:#fff"></div>
<div class="t" id="t73" style="left:285.00px;top:495px;transform:scale(1.0167,1.1);">Sicherheitsoptionen</div>
<div class="t" id="t74" style="left:288.20px;top:520px;transform:scale(1.0136,1.1);">Beim Ausführen der Aufgaben folgendes Benutzerkonto verwenden:</div>
<div style="position:absolute;left:285px;top:538px;width:540px;height:15px;background:#f0f0f0"></div>
<div class="t" id="t75" style="left:287.50px;top:539px;transform:scale(0.9021,1.1);">SYSTEM</div>
<svg style="position:absolute;left:285px;top:561px" width="12" height="12"><circle cx="6" cy="6" r="5.4" fill="#fff" stroke="#a9aeb4" stroke-width="1.2"/></svg>
<div class="t" id="t76" style="left:305.50px;top:560px;transform:scale(1.0078,1.1);">Nur ausführen, wenn der Benutzer angemeldet ist</div>
<svg style="position:absolute;left:285px;top:583px" width="12" height="12"><circle cx="6" cy="6" r="5.4" fill="#fff" stroke="#a9aeb4" stroke-width="1.2"/><circle cx="6" cy="6" r="3" fill="#a6abb1"/></svg>
<div class="t" id="t77" style="left:305.50px;top:582px;transform:scale(1.0179,1.1);">Unabhängig von der Benutzeranmeldung ausführen</div>
<div style="position:absolute;left:306px;top:605px;width:13px;height:13px;box-sizing:border-box;border:1px solid #a9aeb4;background:#fff"></div>
<div class="t" id="t78" style="left:326.50px;top:604px;transform:scale(1.0072,1.1);">Kennwort nicht speichern. Die Aufgabe greift nur auf lokale Ressourcen zu.</div>
<div style="position:absolute;left:285px;top:629px;width:13px;height:13px;box-sizing:border-box;border:1px solid #a9aeb4;background:#fff"></div>
<div class="t" id="t79" style="left:305.50px;top:628px;transform:scale(1.0277,1.1);">Mit höchsten Berechtigungen ausführen</div>
<div style="position:absolute;left:497px;top:657px;width:328px;height:1px;background:#adadad"></div>
<svg style="position:absolute;left:0;top:18px" width="160" height="29"><path d="M2.5 12.5L9.5 5.5V9.5H17.5V15.5H9.5V19.5Z" fill="url(#bl)" stroke="#2a88d8" stroke-width="1" stroke-linejoin="round"/>
<path d="M10.5 8v2.5h6v4" fill="none" stroke="#8fd8ff" stroke-width="0.8"/>
<path d="M40.5 12.5L33.5 5.5V9.5H25.5V15.5H33.5V19.5Z" fill="url(#gr)" stroke="#666" stroke-width="1" stroke-linejoin="round"/>
<path d="M34.5 8l4 4.5-4 4.5" fill="none" stroke="#d8d8d8" stroke-width="0.8"/>
<rect x="45" y="1" width="1" height="22" fill="#a0a0a0"/>

<path d="M57.5 8.5H64.5V7.5H70.5V19.5H57.5Z" fill="#f0d48a" stroke="#c8a050"/>
<rect x="66" y="8" width="3" height="1.3" rx="0.6" fill="#3d8ee0"/>
<path d="M57.5 10.5H70.5V19.5H57.5Z" fill="url(#ff)" stroke="#c49a4a"/>
<path d="M57.5 19.5H70.5" stroke="#a88838"/>
<path d="M59.5 15.8Q62.8 13.5 62.8 9" fill="none" stroke="#2c9e2c" stroke-width="3" stroke-linecap="round"/>
<path d="M59.5 15.8Q62.8 13.5 62.8 9" fill="none" stroke="#5ee05e" stroke-width="1.6" stroke-linecap="round"/>
<path d="M59.8 9.8L63 5.6L66.6 9.6Z" fill="#50d850" stroke="#2c9e2c" stroke-width="0.8" stroke-linejoin="round"/>
<rect x="76.5" y="1.5" width="22" height="21" fill="#e5f3ff" stroke="#3399e8" stroke-width="1.2"/>
<g shape-rendering="crispEdges">
<rect x="80" y="7" width="16" height="13" fill="#8c8c8c"/>
<rect x="81" y="8" width="10" height="1" fill="#e6e6e6"/><rect x="92" y="8" width="1" height="1" fill="#e6e6e6"/><rect x="94" y="8" width="1" height="1" fill="#e6e6e6"/>
<rect x="81" y="9" width="14" height="1" fill="#707888"/>
<rect x="81" y="10" width="14" height="1" fill="#e2e2e2"/>
<rect x="81" y="12" width="4" height="7" fill="#fff"/>
<rect x="85" y="12" width="1" height="7" fill="#5a6a88"/>
<rect x="86" y="12" width="9" height="7" fill="#fafafa"/>
<rect x="82" y="13" width="2" height="1" fill="#3a78c8"/><rect x="82" y="15" width="2" height="1" fill="#3a78c8"/><rect x="82" y="17" width="2" height="1" fill="#3a78c8"/>
</g>
<path d="M88 15.5L91 12.8V18.2Z" fill="#30b030"/>
<rect x="130.5" y="1.5" width="22" height="21" fill="#e5f3ff" stroke="#3399e8" stroke-width="1.2"/>
<g shape-rendering="crispEdges">
<rect x="134" y="7" width="16" height="13" fill="#8c8c8c"/>
<rect x="135" y="8" width="10" height="1" fill="#e6e6e6"/><rect x="146" y="8" width="1" height="1" fill="#e6e6e6"/><rect x="148" y="8" width="1" height="1" fill="#e6e6e6"/>
<rect x="135" y="9" width="14" height="1" fill="#707888"/>
<rect x="135" y="10" width="14" height="1" fill="#e2e2e2"/>
<rect x="135" y="12" width="9" height="7" fill="#fafafa"/>
<rect x="144" y="12" width="1" height="7" fill="#5a6a88"/>
<rect x="145" y="12" width="4" height="7" fill="#fff"/>
<rect x="146" y="13" width="2" height="1" fill="#3a78c8"/><rect x="146" y="15" width="2" height="1" fill="#3a78c8"/><rect x="146" y="17" width="2" height="1" fill="#3a78c8"/>
</g>
<path d="M141 15.5L138 12.8V18.2Z" fill="#30b030"/>
<g shape-rendering="crispEdges">
<rect x="111" y="4" width="13" height="16" fill="#1e3a9e"/>
<rect x="112" y="5" width="2" height="14" fill="#2f56c8"/>
<rect x="114" y="5" width="9" height="14" fill="url(#hb)"/>
<rect x="111" y="19" width="13" height="1" fill="#1a2460"/>
</g>
<path d="M116.3 8.2Q118.5 6 120.6 8Q121.6 10 119.2 11.8Q118.6 12.4 118.6 13.6" fill="none" stroke="#23306a" stroke-width="1.6" transform="translate(0.6,0.6)"/>
<path d="M116.3 8.2Q118.5 6 120.6 8Q121.6 10 119.2 11.8Q118.6 12.4 118.6 13.6" fill="none" stroke="#fff" stroke-width="1.6"/>
<rect x="117.6" y="15.2" width="2" height="1.8" fill="#fff"/></svg>

</body></html>
